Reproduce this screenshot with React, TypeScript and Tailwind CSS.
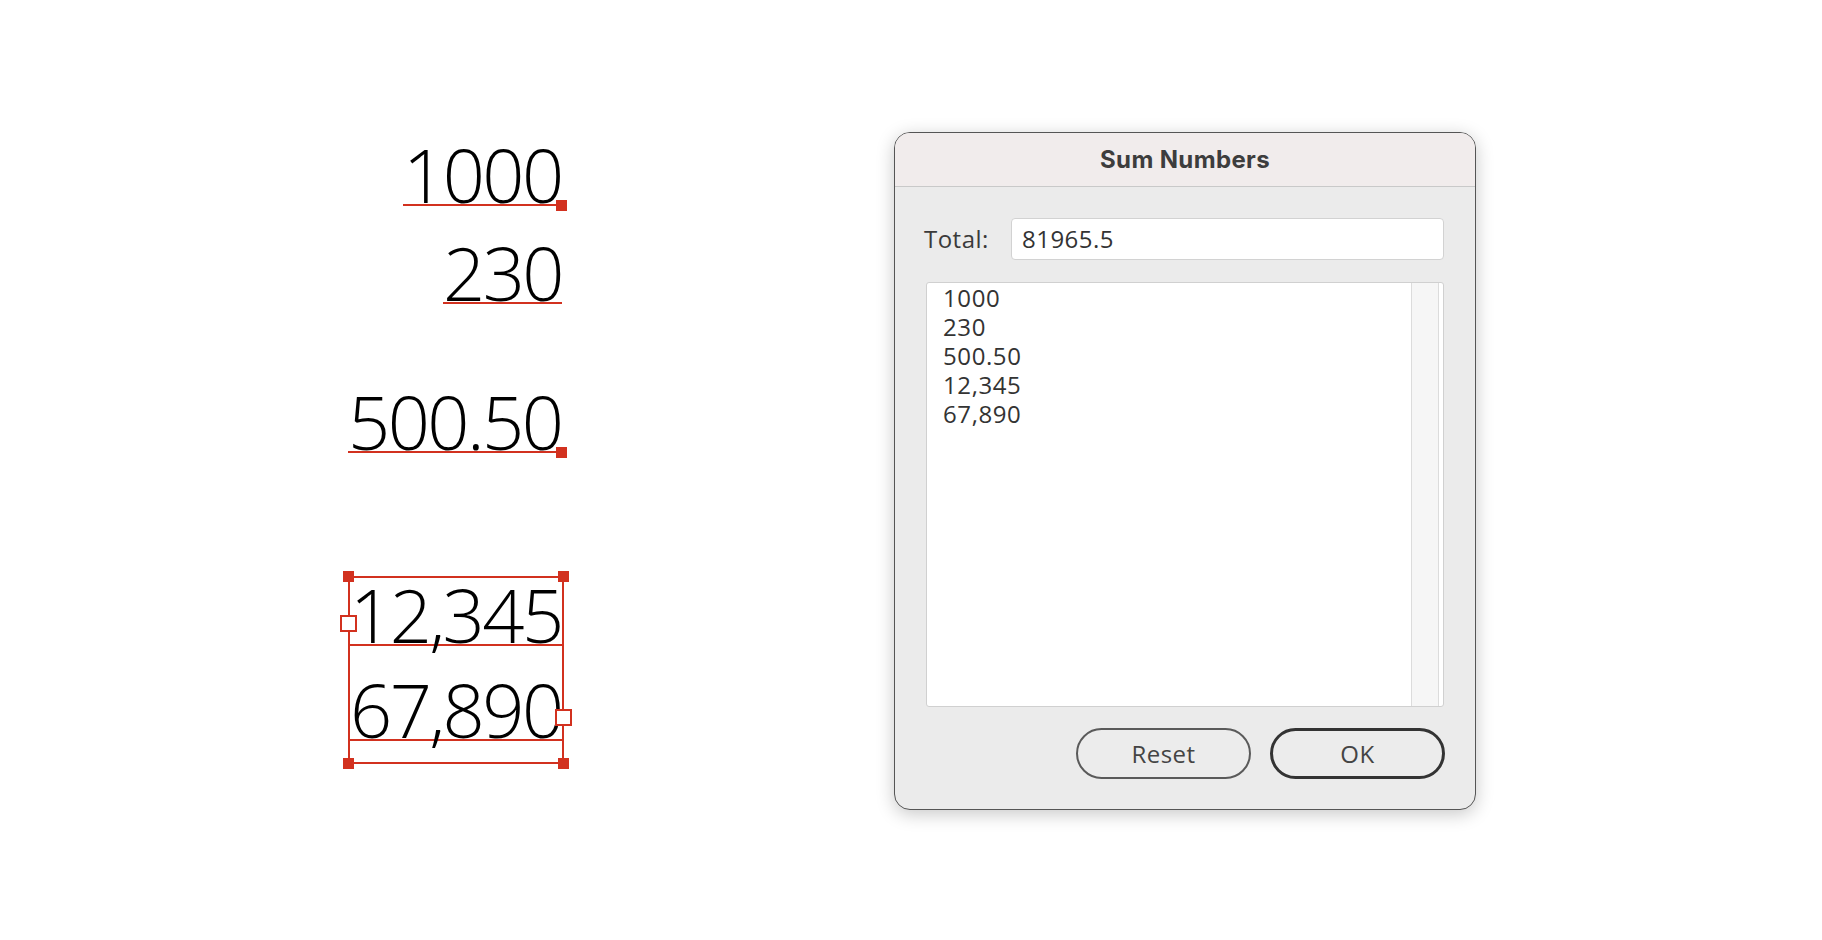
import React from 'react';

const handle = "absolute w-[11px] h-[11px] bg-[#d2311f]";
const port = "absolute w-[17px] h-[17px] bg-white border-2 border-[#d2311f]";
const bigNum = "block text-right pr-[4px] text-[74px] leading-[59px] font-light tracking-[-0.035em] text-black";

const items = ["1000", "230", "500.50", "12,345", "67,890"];

function Canvas() {
  return (
    <div className="relative w-[894px] h-[940px] shrink-0 font-['Open_Sans',sans-serif]">
      {/* point text: 1000 */}
      <div className="absolute left-[403px] top-[145px] w-[159px] border-b-2 border-[#d2311f]">
        <span className={bigNum}>1000</span>
        <span className={`${handle} -right-[5px] -bottom-[7px]`} />
      </div>

      {/* point text: 230 */}
      <div className="absolute left-[443px] top-[243px] w-[119px] border-b-2 border-[#d2311f]">
        <span className={bigNum}>230</span>
      </div>

      {/* point text: 500.50 */}
      <div className="absolute left-[348px] top-[392px] w-[214px] border-b-2 border-[#d2311f]">
        <span className={bigNum}>500.50</span>
        <span className={`${handle} -right-[5px] -bottom-[7px]`} />
      </div>

      {/* selection: 12,345 + 67,890 */}
      <div className="absolute left-[348px] top-[576px] w-[216px] h-[188px] border-2 border-[#d2311f] flex flex-col">
        <div className="h-[68px] flex items-end border-b-2 border-[#d2311f]">
          <span className={`${bigNum} w-full`}>12,345</span>
        </div>
        <div className="h-[95px] flex items-end border-b-2 border-[#d2311f]">
          <span className={`${bigNum} w-full`}>67,890</span>
        </div>
        <span className={`${handle} -left-[7px] -top-[7px]`} />
        <span className={`${handle} -right-[7px] -top-[7px]`} />
        <span className={`${handle} -left-[7px] -bottom-[7px]`} />
        <span className={`${handle} -right-[7px] -bottom-[7px]`} />
        <span className={`${port} -left-[10px] top-[37px]`} />
        <span className={`${port} -right-[10px] top-[131px]`} />
      </div>
    </div>
  );
}

function Dialog() {
  return (
    <div className="mt-[132px] w-[582px] h-[678px] rounded-[16px] border border-[#555] bg-[#ebebeb] overflow-hidden shadow-[0_4px_18px_rgba(0,0,0,0.22)] flex flex-col font-['Open_Sans',sans-serif] text-[#333]">
      {/* Title bar */}
      <div className="h-[54px] shrink-0 bg-[#f1ecec] border-b border-[#c9c9c9] flex items-center justify-center">
        <span className="font-['Inter',sans-serif] font-bold text-[24px] tracking-[0.015em] text-[#3d3d3d]">Sum Numbers</span>
      </div>

      <div className="flex-1 flex flex-col pl-[29px] pr-[31px] pt-[31px]">
        {/* Total row */}
        <div className="flex items-center h-[42px]">
          <span className="text-[24px] tracking-[0.02em] w-[87px] shrink-0 text-[#3a3a3a]">Total:</span>
          <div className="flex-1 h-[42px] bg-white border border-[#d2d2d2] rounded-[4px] flex items-center pl-[10px] text-[24px] tracking-[0.02em] text-[#333]">
            81965.5
          </div>
        </div>

        {/* List */}
        <div className="mt-[22px] ml-[2px] h-[425px] bg-white border border-[#d0d0d0] rounded-[3px] flex overflow-hidden">
          <div className="flex-1 pl-[16px] pt-0">
            {items.map((it) => (
              <div key={it} className="h-[29px] text-[24px] leading-[29px] tracking-[0.025em] text-[#333]">{it}</div>
            ))}
          </div>
          <div className="w-[28px] bg-[#f6f6f6] border-l border-r border-[#dcdcdc]" />
          <div className="w-[4px]" />
        </div>

        {/* Buttons */}
        <div className="mt-[21px] flex justify-end gap-[19px] -mr-[1px]">
          <button className="w-[175px] h-[51px] rounded-full border-2 border-[#5a5a5a] text-[24px] tracking-[0.02em] text-[#444] bg-[#ececec]">Reset</button>
          <button className="w-[175px] h-[51px] rounded-full border-[3px] border-[#333] text-[24px] tracking-[0.02em] text-[#444] bg-[#ececec]">OK</button>
        </div>
      </div>
    </div>
  );
}

export default function App() {
  return (
    <div className="w-full h-[940px] bg-white flex overflow-hidden">
      <Canvas />
      <Dialog />
    </div>
  );
}
